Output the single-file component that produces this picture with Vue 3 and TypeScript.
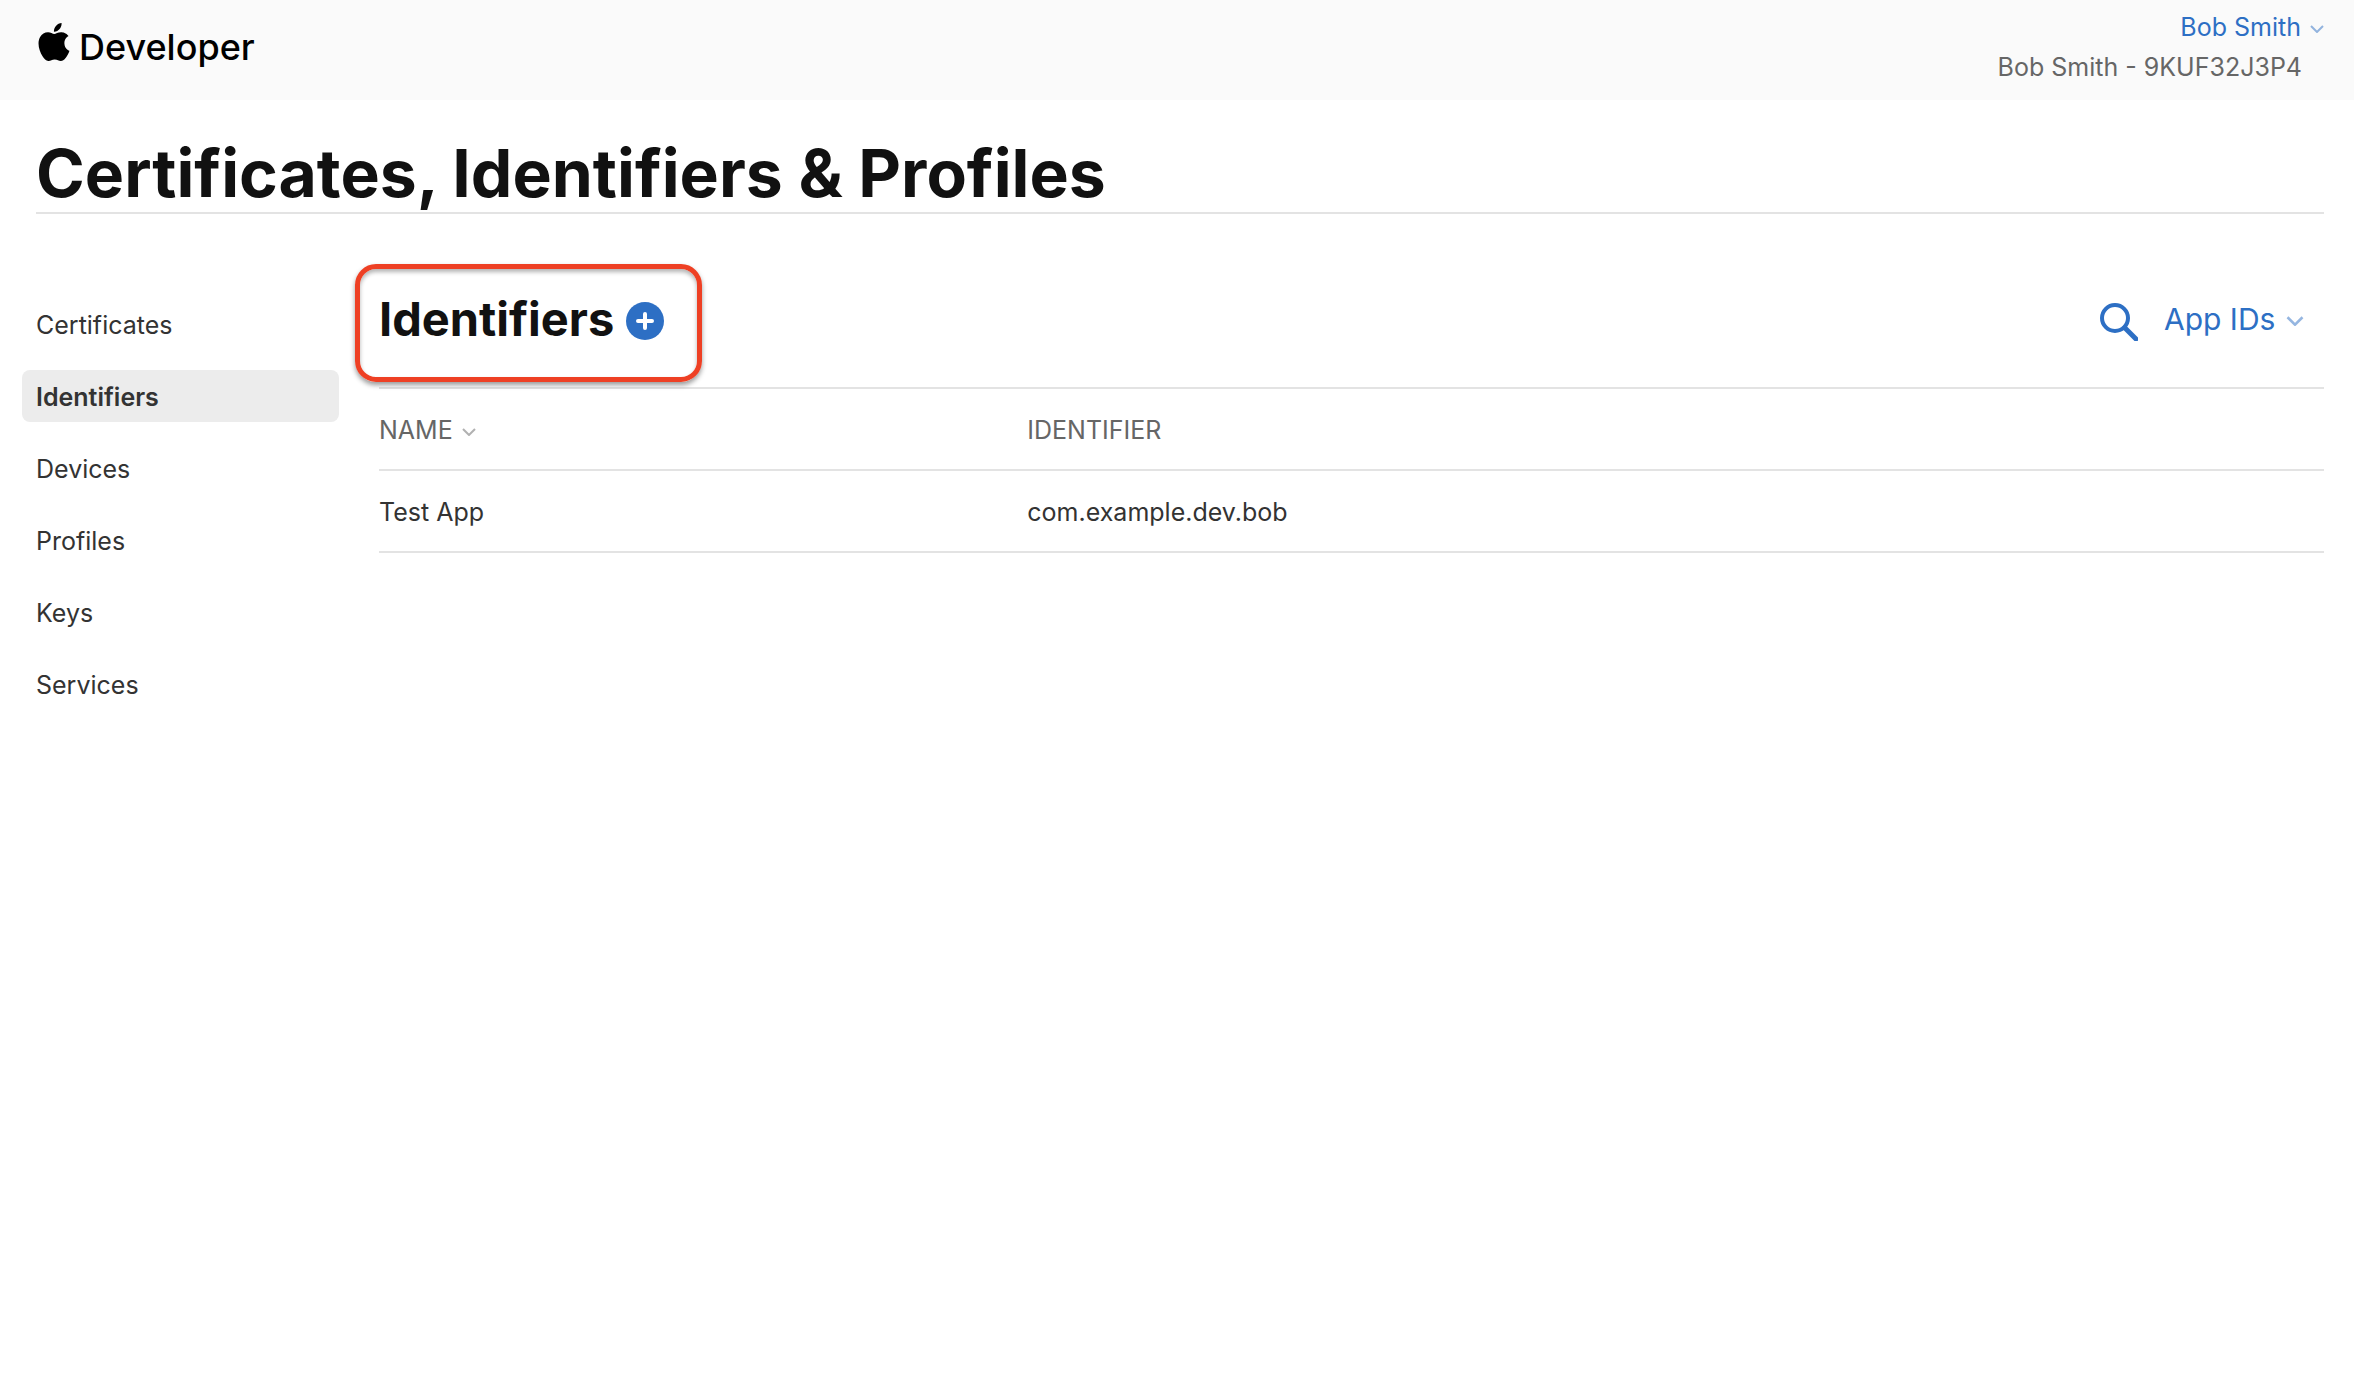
<script setup lang="ts">
import { ref } from 'vue'

interface NavItem {
  label: string
  href: string
}

interface Identifier {
  name: string
  identifier: string
}

const navItems: NavItem[] = [
  { label: 'Certificates', href: '#certificates' },
  { label: 'Identifiers', href: '#identifiers' },
  { label: 'Devices', href: '#devices' },
  { label: 'Profiles', href: '#profiles' },
  { label: 'Keys', href: '#keys' },
  { label: 'Services', href: '#services' },
]

const current = ref('Identifiers')
const platform = ref('App IDs')
const identifiers = ref<Identifier[]>([
  { name: 'Test App', identifier: 'com.example.dev.bob' },
])
</script>

<template>
  <div class="page">
    <header class="top-bar">
      <a class="brand" href="#home">
        <svg class="brand-logo" viewBox="2 0 20 24" aria-hidden="true">
          <path
            d="M12.152 6.896c-.948 0-2.415-1.078-3.96-1.04-2.04.027-3.91 1.183-4.961 3.014-2.117 3.675-.546 9.103 1.519 12.09 1.013 1.454 2.208 3.09 3.792 3.039 1.52-.065 2.09-.987 3.935-.987 1.831 0 2.35.987 3.96.948 1.637-.026 2.676-1.48 3.676-2.948 1.156-1.688 1.636-3.325 1.662-3.415-.039-.013-3.182-1.221-3.22-4.857-.026-3.04 2.48-4.494 2.597-4.559-1.429-2.09-3.623-2.324-4.39-2.376-2-.156-3.675 1.09-4.61 1.09zM15.53 3.83c.843-1.012 1.4-2.427 1.245-3.83-1.207.052-2.662.805-3.532 1.818-.78.896-1.454 2.338-1.273 3.714 1.338.104 2.715-.688 3.559-1.701"
          />
        </svg>
        <span>Developer</span>
      </a>
      <div class="account">
        <button class="account-menu" type="button">
          Bob Smith
          <svg class="chevron" viewBox="0 0 14 8" aria-hidden="true">
            <path d="M1 1l6 6 6-6" />
          </svg>
        </button>
        <span class="team">Bob Smith - 9KUF32J3P4</span>
      </div>
    </header>

    <h1 class="page-title">Certificates, Identifiers &amp; Profiles</h1>

    <div class="columns">
      <nav class="side-nav" aria-label="Sections">
        <a
          v-for="item in navItems"
          :key="item.label"
          :href="item.href"
          :class="['nav-link', { active: item.label === current }]"
          @click="current = item.label"
          >{{ item.label }}</a
        >
      </nav>

      <main class="content">
        <div class="content-head">
          <div class="callout">
            <h2>Identifiers</h2>
            <button class="add" type="button" aria-label="Add identifier">
              <svg viewBox="0 0 38 38" aria-hidden="true">
                <circle cx="19" cy="19" r="19" />
                <path d="M19 12v14M12 19h14" />
              </svg>
            </button>
          </div>
          <div class="tools">
            <button class="search" type="button" aria-label="Search">
              <svg viewBox="0 0 38 38" aria-hidden="true">
                <circle cx="15" cy="15" r="13" />
                <path d="M25 25l11 11" />
              </svg>
            </button>
            <label class="filter">
              <select v-model="platform" aria-label="Identifier type">
                <option>App IDs</option>
              </select>
              <svg class="chevron chevron-lg" viewBox="0 0 14 8" aria-hidden="true">
                <path d="M1 1l6 6 6-6" />
              </svg>
            </label>
          </div>
        </div>

        <table class="list">
          <thead>
            <tr>
              <th scope="col">
                <button class="sort" type="button">
                  NAME
                  <svg class="chevron" viewBox="0 0 14 8" aria-hidden="true">
                    <path d="M1 1l6 6 6-6" />
                  </svg>
                </button>
              </th>
              <th scope="col" class="wide">IDENTIFIER</th>
            </tr>
          </thead>
          <tbody>
            <tr v-for="row in identifiers" :key="row.identifier">
              <td>{{ row.name }}</td>
              <td>{{ row.identifier }}</td>
            </tr>
          </tbody>
        </table>
      </main>
    </div>
  </div>
</template>

<style>
body {
  background: #fff;
}
</style>

<style scoped>
.page {
  color: #333;
  font-family: Inter, 'Liberation Sans', sans-serif;
  font-size: 25px;
  line-height: 40px;
}

button,
select {
  margin: 0;
  padding: 0;
  border: 0;
  background: none;
  color: inherit;
  font: inherit;
  line-height: inherit;
  cursor: pointer;
}

a {
  color: inherit;
  text-decoration: none;
}

svg {
  display: block;
  flex: none;
}

.top-bar {
  display: flex;
  justify-content: space-between;
  padding: 7px 30px 13px 38px;
  background: #fafafa;
}

.brand {
  display: flex;
  gap: 9px;
  padding-top: 16px;
  color: #000;
  font-size: 36px;
  font-weight: 500;
  line-height: 48px;
}

.brand-logo {
  width: 32px;
  height: 38px;
}

.account {
  display: flex;
  flex-direction: column;
  align-items: flex-end;
}

.account-menu {
  display: flex;
  align-items: center;
  gap: 9px;
  color: #2d6fc4;
}

.team {
  padding-right: 22px;
  color: #666;
}

.chevron {
  width: 14px;
  height: 8px;
  margin-top: 4px;
  fill: none;
  stroke: currentColor;
  stroke-width: 2;
  opacity: 0.5;
}

.chevron-lg {
  width: 18px;
  height: 10px;
}

.page-title {
  margin: 34px 30px 0 36px;
  border-bottom: 2px solid #e3e3e3;
  color: #111;
  font-size: 66px;
  font-weight: 700;
  line-height: 78px;
}

.columns {
  display: flex;
  gap: 40px;
  padding: 50px 30px 0 22px;
}

.side-nav {
  display: flex;
  flex: none;
  flex-direction: column;
  gap: 20px;
  width: 317px;
  padding-top: 34px;
}

.nav-link {
  padding: 7px 14px 5px;
  border-radius: 8px;
}

.nav-link.active {
  background: #ececec;
  font-weight: 600;
}

.content {
  flex: 1;
  min-width: 0;
}

.content-head {
  display: flex;
  align-items: flex-start;
  justify-content: space-between;
}

.callout {
  display: flex;
  align-items: flex-start;
  gap: 12px;
  margin: 0 0 5px -24px;
  padding: 24px 33px 32px 19px;
  border: 5px solid #ee4024;
  border-radius: 21px;
  box-shadow:
    0 3px 5px rgba(0, 0, 0, 0.4),
    inset 0 3px 4px rgba(0, 0, 0, 0.3);
}

h2 {
  margin: 0;
  color: #111;
  font-size: 47px;
  font-weight: 700;
  line-height: 52px;
}

.add {
  width: 38px;
  height: 38px;
  margin-top: 9px;
}

.add circle {
  fill: #2d6fc4;
}

.add path {
  fill: none;
  stroke: #fff;
  stroke-width: 4;
  stroke-linecap: round;
}

.tools {
  display: flex;
  align-items: flex-start;
  gap: 26px;
  padding: 35px 20px 0 0;
  color: #2d6fc4;
}

.search {
  width: 38px;
  height: 38px;
  margin-top: 4px;
}

.search svg {
  width: 38px;
  height: 38px;
  fill: none;
  stroke: currentColor;
  stroke-width: 4;
}

.search path {
  stroke-width: 5;
  stroke-linecap: round;
}

.filter {
  display: flex;
  align-items: center;
  gap: 10px;
}

.filter select {
  appearance: none;
  font-size: 30px;
  line-height: 40px;
}

.list {
  width: 100%;
  border-collapse: collapse;
  border-top: 2px solid #e3e3e3;
  table-layout: fixed;
}

th,
td {
  padding: 21px 0 19px;
  border-bottom: 2px solid #e3e3e3;
  text-align: left;
}

th {
  width: 33.3333%;
  color: #666;
  font-weight: 400;
}

th.wide {
  width: auto;
}

.sort {
  display: flex;
  align-items: center;
  gap: 9px;
}
</style>
